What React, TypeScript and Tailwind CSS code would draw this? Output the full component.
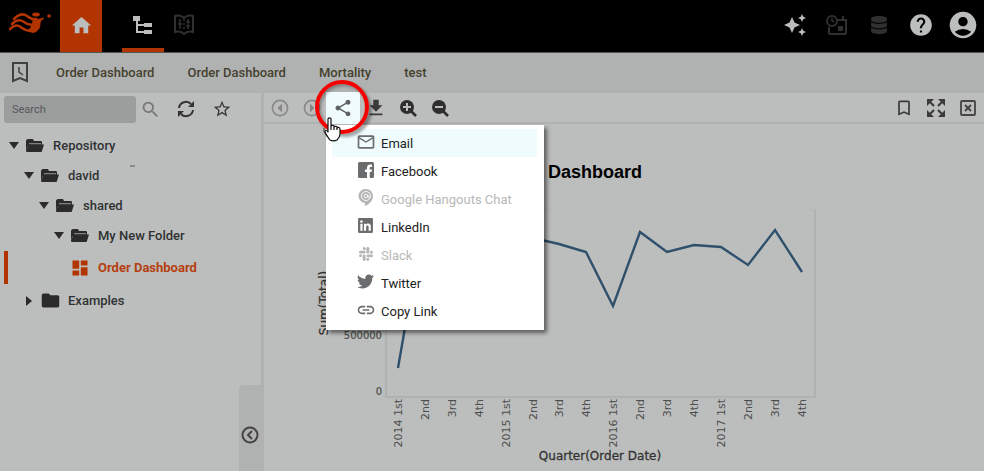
import React from 'react';
import {
  MdAccountCircle, MdAutoAwesome, MdBookmarkBorder, MdDashboard, MdDownload, MdFolder,
  MdHelp, MdHome, MdLink, MdMailOutline, MdSearch, MdShare, MdStarBorder,
} from 'react-icons/md';
import { FaDatabase, FaLinkedin, FaSlack, FaTwitter } from 'react-icons/fa';

function Logo() {
  return (
    <svg viewBox="0 0 42 22" className="h-[22px] w-[42px]" fill="none" stroke="#b23400" strokeWidth="2.6" strokeLinecap="round">
      <path d="M5 7c4-4 9-6 13-3 3 2 5 4 9 3" />
      <path d="M3 12c4-4 8-5 12-2 4 3 7 4 12 2" />
      <path d="M1 17c4-4 8-5 12-1 4 3 8 4 13 2" />
      <path d="M24 7c4 1 8 0 11-1-2 2-4 3-4 5 0 4-1 7-5 9-2 1-5 0-7-2 4-2 5-6 5-11z" fill="#b23400" strokeWidth="1" />
      <ellipse cx="27" cy="2.500" rx="3.800" ry="2" fill="#b23400" stroke="none" />
      <circle cx="40" cy="4" r="1.800" fill="#b23400" stroke="none" />
    </svg>
  );
}

function TreeIcon() {
  return (
    <svg viewBox="0 0 20 20" className="size-5" fill="#bcbebd">
      <path d="M0 1h7v5H5v3h6V8h8v4h-8v-1H5v5h6v-1h8v4h-8v-1H3V6H0z" />
    </svg>
  );
}

function BookIcon() {
  return (
    <svg viewBox="0 0 22 22" className="size-[22px]" fill="none" stroke="#303030" strokeWidth="2">
      <path d="M11 4C8 1 4 1 2 2v16c3-1 6-1 9 2 3-3 6-3 9-2V2c-2-1-6-1-9 2z" />
      <path d="M7 5v10M15 5v10M11 5v2m0 2v2m0 2v2M5 10h4M13 8h4M13 12h4" strokeWidth="1.500" />
    </svg>
  );
}

function ScheduleIcon() {
  return (
    <svg viewBox="0 0 22 22" className="size-[22px]" fill="none" stroke="#303030" strokeWidth="2">
      <circle cx="6" cy="7" r="5" />
      <path d="M6 4v3l2 1" strokeWidth="1.500" />
      <path d="M3 13v6c0 1 0 1 1 1h15c1 0 1 0 1-1V6h-8M17 2v4" />
      <path d="M12 12h5v5h-5z" fill="#303030" stroke="none" />
    </svg>
  );
}

function RecentIcon() {
  return (
    <svg viewBox="0 0 18 21" className="h-[21px] w-[18px]" fill="none" stroke="#3d4244" strokeWidth="2">
      <path d="M2 1h14v18l-7-3-7 3z" />
      <path d="M8 5v5l4 3" strokeWidth="1.500" />
    </svg>
  );
}

function CircleArrow({ left, className }: { left: boolean; className: string }) {
  return (
    <svg viewBox="0 0 18 18" className={className} fill="none" stroke="currentColor" strokeWidth="1.600">
      <circle cx="9" cy="9" r="7.600" />
      <path d={left ? 'M10.500 5.500 7 9l3.500 3.500z' : 'M7.500 5.500 11 9l-3.500 3.500z'} fill="currentColor" strokeWidth="1" />
    </svg>
  );
}

function CollapseIcon() {
  return (
    <svg viewBox="0 0 18 18" className="size-[18px]" fill="none" stroke="#444" strokeWidth="2">
      <circle cx="9" cy="9" r="7.500" />
      <path d="M11 5 7 9l4 4" />
    </svg>
  );
}

function ZoomIcon({ plus }: { plus: boolean }) {
  return (
    <svg viewBox="0 0 18 18" className="size-[18px]" fill="none">
      <path d="M12 12l5 5" stroke="#2e2e2e" strokeWidth="2.600" />
      <circle cx="8" cy="8" r="7" fill="#2e2e2e" />
      <path d={plus ? 'M4 8h8M8 4v8' : 'M4 8h8'} stroke="#bcbebd" strokeWidth="2" />
    </svg>
  );
}

function ExpandIcon() {
  return (
    <svg viewBox="0 0 18 18" className="size-[18px]" fill="#3a3a3a" stroke="#3a3a3a" strokeWidth="2">
      <path d="M0 0h7L0 7zM18 0v7l-7-7zM18 18h-7l7-7zM0 18v-7l7 7z" stroke="none" />
      <path d="M2 2l5 5M16 2l-5 5M16 16l-5-5M2 16l5-5" />
    </svg>
  );
}

function CloseBoxIcon() {
  return (
    <svg viewBox="0 0 16 16" className="size-4" fill="none" stroke="#444" strokeWidth="1.800">
      <rect x="1" y="1" width="14" height="14" rx="1" />
      <path d="M5 5l6 6M11 5l-6 6" strokeWidth="2" />
    </svg>
  );
}

function RefreshIcon() {
  return (
    <svg viewBox="0 0 18 18" className="size-[18px]" fill="none" stroke="#333" strokeWidth="2">
      <path d="M2 8a7 7 0 0 1 12-4M16 10a7 7 0 0 1-12 4" />
      <path d="M17 1v6h-6zM1 17v-6h6z" fill="#333" stroke="none" />
    </svg>
  );
}

function FacebookIcon() {
  return (
    <svg viewBox="0 0 16 16" className="size-4" fill="currentColor">
      <rect width="16" height="16" rx="1.500" />
      <path d="M9 16v-6H7V7.500h2V6c0-2.400 1.200-3.500 3.300-3.500H14V5h-1.200C12 5 11.700 5.400 11.700 6v1.500H14L13.600 10h-1.900v6z" fill="#fff" />
    </svg>
  );
}

function HangoutsIcon() {
  return (
    <svg viewBox="0 0 18 18" className="size-[18px]" fill="none">
      <path d="M9 0a7 7 0 0 0-1 14v3c5-2 8-6 8-10a7 7 0 0 0-7-7z" fill="#b5b5b5" />
      <circle cx="9" cy="7" r="4.500" stroke="#fff" strokeWidth="0.900" />
      <circle cx="9" cy="7" r="1.800" stroke="#fff" strokeWidth="0.900" />
      <path d="M11 6v2c1 1 2 0 2-1" stroke="#fff" strokeWidth="0.900" />
    </svg>
  );
}

function HandCursor() {
  return (
    <svg viewBox="0 0 18 26" className="pointer-events-none absolute -left-[3px] top-6 z-30 h-[26px] w-[18px]" fill="#fff" stroke="#111" strokeWidth="1.200" strokeLinejoin="round">
      <path d="M1 12c-1 2 2 6 4 8" fill="none" stroke="#777" strokeWidth="2.500" />
      <path d="M5 3c0-1.500 3-1.500 3 0v7c0-1 3-1 3 0v1c0-1 3-1 3 0v1c0-1 3-1 3 1v5c0 2-1 4-3 6-2 1-5 1-7 0-2-3-4-5-5-8 0-2 2-2 3 0z" />
      <path d="M8 10v4M11 11v3M14 12v2" />
    </svg>
  );
}

const shareItems = [
  { label: 'Email', icon: <MdMailOutline size={20} />, disabled: false },
  { label: 'Facebook', icon: <FacebookIcon />, disabled: false },
  { label: 'Google Hangouts Chat', icon: <HangoutsIcon />, disabled: true },
  { label: 'LinkedIn', icon: <FaLinkedin size={17} />, disabled: false },
  { label: 'Slack', icon: <FaSlack size={16} />, disabled: true },
  { label: 'Twitter', icon: <FaTwitter size={17} />, disabled: false },
  { label: 'Copy Link', icon: <MdLink size={20} />, disabled: false },
];

function ShareMenu() {
  return (
    <ul className="absolute left-0 top-[33px] z-10 w-[218px] bg-white pt-1 pr-[7px] pb-[5px] pl-1.5 shadow-[3px_3px_4px_rgba(0,0,0,0.5)]">
      {shareItems.map((item, i) => (
        <li key={item.label}>
          <button
            disabled={item.disabled}
            className={`flex h-7 w-full items-center gap-[7px] pl-[25px] text-[13px] ${i === 0 ? 'bg-[#effbfc]' : ''} ${item.disabled ? 'text-[#b8b8b8]' : 'text-[#222]'}`}
          >
            <span className={`flex w-[17px] shrink-0 justify-center pb-0.5 ${item.disabled ? 'text-[#b5b5b5]' : 'text-[#6b6c6e]'}`}>
              <span className="shrink-0">{item.icon}</span>
            </span>
            <span className="pt-0.5">{item.label}</span>
          </button>
        </li>
      ))}
    </ul>
  );
}

function Tool({ label, children }: { label: string; children: React.ReactNode }) {
  return (
    <button aria-label={label} className="flex h-7 w-8 items-center justify-center text-[#3a3a3a]">
      {children}
    </button>
  );
}

function Toolbar() {
  return (
    <div className="flex h-[31px] items-center border-b-2 border-[#b0b2b1]">
      <Tool label="Previous"><CircleArrow left className="size-[18px] text-[#888]" /></Tool>
      <Tool label="Next"><CircleArrow left={false} className="size-[18px] text-[#888]" /></Tool>
      <div className="relative -ml-0.5">
        <button aria-label="Share" className="flex h-8 w-[34px] items-center justify-center bg-[#effbfc] text-[#5f6163]">
          <MdShare size={20} />
        </button>
        <span className="pointer-events-none absolute -left-[11px] -top-3 z-20 size-[54px] rounded-full border-4 border-[#f40000] shadow-[3px_3px_3px_rgba(0,0,0,0.35),inset_2px_2px_3px_rgba(0,0,0,0.3)]" />
        <HandCursor />
        <ShareMenu />
      </div>
      <Tool label="Download"><MdDownload size={22} /></Tool>
      <Tool label="Zoom in"><ZoomIcon plus /></Tool>
      <Tool label="Zoom out"><ZoomIcon plus={false} /></Tool>
      <div className="ml-auto flex">
        <Tool label="Bookmark"><MdBookmarkBorder size={20} /></Tool>
        <Tool label="Full screen"><ExpandIcon /></Tool>
        <Tool label="Close"><CloseBoxIcon /></Tool>
      </div>
    </div>
  );
}

const values = [368, 213, 240, 228, 250, 238, 244, 252, 306, 232, 252, 245, 247, 265, 230, 272];
const quarters = ['1st', '2nd', '3rd', '4th'];
const pointX = (i: number) => 86 + Math.round(i * 26.9);

function Chart() {
  return (
    <svg viewBox="0 0 512 266" className="mt-4 h-[266px] w-[512px] font-['DejaVu_Sans','Liberation_Sans',sans-serif]" fill="#4d4e4e">
      <path d="M74 10v187h429V10" fill="none" stroke="#b0b2b1" strokeWidth="2" />
      <path d="M500 10h6M500 72h6M500 134h6M230 10h6M230 72h6" stroke="#b0b2b1" />
      <polyline points={values.map((v, i) => `${pointX(i)},${v - 200}`).join(' ')} fill="none" stroke="#2f506c" strokeWidth="2.400" />
      <g fontSize="10" stroke="#4d4e4e" strokeWidth="0.200">
        <text x="70" y="139" textAnchor="end">500000</text>
        <text x="70" y="195" textAnchor="end">0</text>
      </g>
      <g fontSize="11">
        {values.map((_, i) => (
          <text key={i} transform={`translate(${pointX(i) + 4} 199) rotate(-90)`} textAnchor="end">
            {i % 4 === 0 ? `${2014 + i / 4} 1st` : quarters[i % 4]}
          </text>
        ))}
      </g>
      <g fontSize="12" fill="#333" stroke="#333" strokeWidth="0.300">
        <text x="288" y="260" textAnchor="middle">Quarter(Order Date)</text>
        <text transform="translate(16 103) rotate(-90)" textAnchor="middle">Sum(Total)</text>
      </g>
    </svg>
  );
}

function Caret({ open }: { open: boolean }) {
  return (
    <svg viewBox="0 0 10 10" className="size-2.5" fill="#2b2b2b">
      <path d={open ? 'M0 1h10L5 8z' : 'M2 0v10l6-5z'} />
    </svg>
  );
}

function FolderOpen() {
  return (
    <svg viewBox="0 0 20 16" className="h-4 w-5">
      <path d="M1 3c0-1 1-2 2-2h5l1 2h7c1 0 1 1 1 2v3H3l-2 4z" fill="#2b2b2b" />
      <path d="M4 5h12v1.500H4z" fill="#808281" />
      <path d="M4 6.500h15l-2 6.500c0 1-1 1-2 1H2c-1 0-1-1-1-2z" fill="#2b2b2b" />
    </svg>
  );
}

function TreeRow({ indent, label, open = true, children }: { indent: string; label: string; open?: boolean; children?: React.ReactNode }) {
  return (
    <li className={`flex items-center ${open ? 'h-[30px]' : 'h-[33px]'} ${indent}`}>
      <button className="flex h-full items-center">
        <Caret open={open} />
        <span className="mr-2 ml-1.5 flex w-5 justify-center text-[#2b2b2b]">{open ? <FolderOpen /> : <MdFolder size={21} className="shrink-0" />}</span>
        {label}
      </button>
      {children}
    </li>
  );
}

function Sidebar() {
  return (
    <aside className="flex w-[264px] shrink-0 flex-col border-r-[3px] border-[#b0b2b1]">
      <div className="flex h-8 items-center pl-1">
        <input aria-label="Search" placeholder="Search" className="h-[27px] w-[132px] rounded-[3px] bg-[#9c9e9d] px-2 text-[11px] placeholder:text-[#55585a]" />
        <button aria-label="Find" className="ml-1 text-[#777]"><MdSearch size={21} /></button>
        <button aria-label="Refresh" className="ml-4"><RefreshIcon /></button>
        <button aria-label="Favorites" className="ml-[17px] text-[#3a3a3a]"><MdStarBorder size={20} /></button>
      </div>
      <ul className="mt-1.5 text-[13px] font-medium text-[#2f3233]">
        <TreeRow indent="pl-[9px]" label="Repository" />
        <TreeRow indent="pl-6" label="david">
          <span className="mt-1 ml-[31px] h-0.5 w-[5px] self-start bg-[#8a8c8b]" />
        </TreeRow>
        <TreeRow indent="pl-[39px]" label="shared" />
        <TreeRow indent="pl-[54px]" label="My New Folder" />
        <li className="ml-1 flex h-[33px] items-center border-l-4 border-[#b23400] pl-[62px] text-[#b5400f]">
          <button className="flex items-center gap-2 font-bold">
            <MdDashboard size={20} className="text-[#b23400]" />
            Order Dashboard
          </button>
        </li>
        <TreeRow indent="pl-6" label="Examples" open={false} />
      </ul>
      <div className="mt-auto flex h-[86px] w-[22px] items-center justify-center self-end rounded-tl-sm bg-[#b0b2b1] pt-3.5">
        <button aria-label="Collapse panel"><CollapseIcon /></button>
      </div>
    </aside>
  );
}

export default function App() {
  return (
    <div className="flex min-h-screen flex-col bg-[#bcbebd] font-[Roboto,'Liberation_Sans',sans-serif]">
      <header className="flex h-[52px] items-center bg-black text-[#bcbebd]">
        <span className="px-[9px] pb-1.5"><Logo /></span>
        <button aria-label="Home" className="flex h-full w-[42px] items-center justify-center bg-[#b23400] pb-0.5"><MdHome size={23} /></button>
        <button aria-label="Repository" className="ml-5 flex h-full w-[42px] items-center justify-center border-b-4 border-[#b23400] pt-0.5"><TreeIcon /></button>
        <button aria-label="Designer" className="ml-[9px] pb-0.5"><BookIcon /></button>
        <nav className="ml-auto flex items-center pr-[5px] pb-0.5">
          <button aria-label="Assistant" className="mr-[19px]"><MdAutoAwesome size={24} /></button>
          <button aria-label="Schedules" className="mr-[22px]"><ScheduleIcon /></button>
          <button aria-label="Data sources" className="mr-5 text-[#303030]"><FaDatabase size={18} /></button>
          <button aria-label="Help" className="mr-[13px]"><MdHelp size={26} /></button>
          <button aria-label="Account"><MdAccountCircle size={32} /></button>
        </nav>
      </header>
      <nav className="flex h-[41px] items-center border-t border-[#555] bg-[#b0b2b1] pl-[11px] text-[13px] font-medium text-[#45412f]">
        <button aria-label="Recent" className="mr-[27px] pb-0.5"><RecentIcon /></button>
        <div className="flex gap-[33px]">
          <a href="#order-1">Order Dashboard</a>
          <a href="#order-2">Order Dashboard</a>
          <a href="#mortality">Mortality</a>
          <a href="#test">test</a>
        </div>
      </nav>
      <div className="flex grow">
        <Sidebar />
        <main className="min-w-0 grow">
          <Toolbar />
          <section className="ml-12 w-[512px] pt-9">
            <h1 className="text-center font-['Liberation_Sans',Arial,sans-serif] text-lg leading-6 font-bold text-black">Order Dashboard</h1>
            <Chart />
          </section>
        </main>
      </div>
    </div>
  );
}
